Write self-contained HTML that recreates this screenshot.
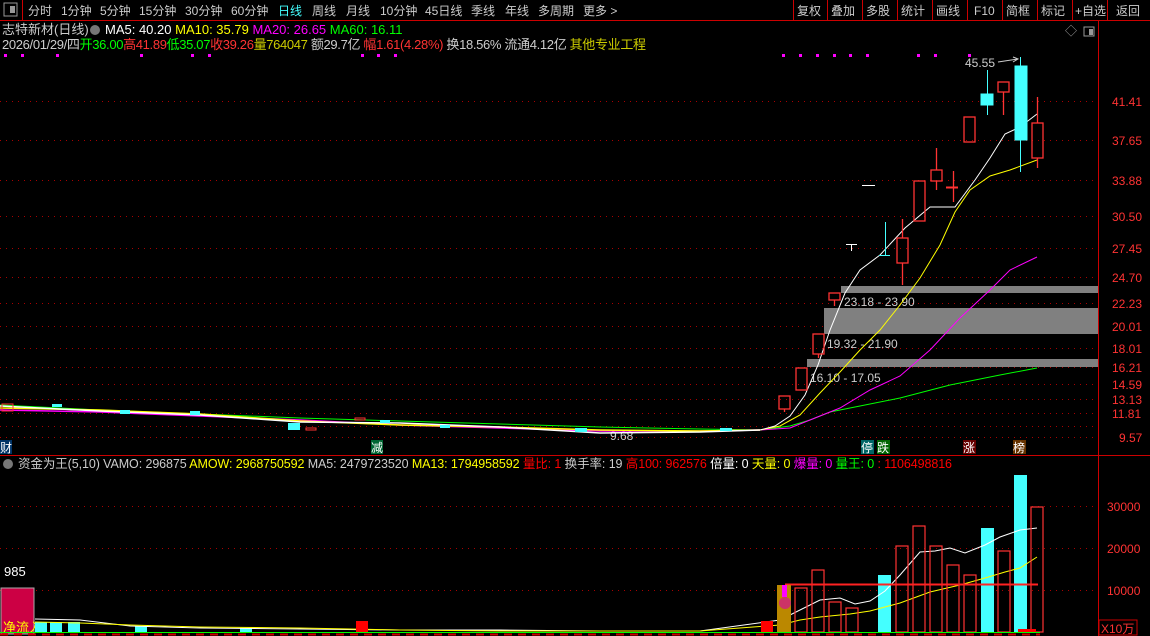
<!DOCTYPE html>
<html><head><meta charset="utf-8"><style>
body{margin:0;background:#000;width:1150px;height:636px;overflow:hidden;font-family:"Liberation Sans","Noto Sans CJK SC",sans-serif}
svg{position:absolute;left:0;top:0}
text{font-family:"Liberation Sans","Noto Sans CJK SC",sans-serif;font-size:12px}
</style></head><body>
<svg width="1150" height="636" viewBox="0 0 1150 636">
<!-- toolbar -->
<line x1="0" y1="20.5" x2="1150" y2="20.5" stroke="#c00" stroke-width="1"/>
<rect x="4" y="3" width="13" height="13" fill="none" stroke="#999"/><rect x="10" y="6" width="5" height="7" fill="#999"/>
<line x1="22.5" y1="0" x2="22.5" y2="20" stroke="#c00"/>
<g fill="#ccc" style="font-size:13px">
<text x="28" y="15">分时</text><text x="61" y="15">1分钟</text><text x="100" y="15">5分钟</text><text x="139" y="15">15分钟</text><text x="185" y="15">30分钟</text><text x="231" y="15">60分钟</text>
<text x="278" y="15" fill="#4ff">日线</text><text x="312" y="15">周线</text><text x="346" y="15">月线</text><text x="380" y="15">10分钟</text><text x="425" y="15">45日线</text><text x="471" y="15">季线</text><text x="505" y="15">年线</text><text x="538" y="15">多周期</text><text x="583" y="15">更多 &gt;</text>
</g>
<g stroke="#c00"><line x1="793.5" y1="0" x2="793.5" y2="20"/><line x1="827.5" y1="0" x2="827.5" y2="20"/><line x1="862.5" y1="0" x2="862.5" y2="20"/><line x1="897.5" y1="0" x2="897.5" y2="20"/><line x1="932.5" y1="0" x2="932.5" y2="20"/><line x1="967.5" y1="0" x2="967.5" y2="20"/><line x1="1002.5" y1="0" x2="1002.5" y2="20"/><line x1="1037.5" y1="0" x2="1037.5" y2="20"/><line x1="1072.5" y1="0" x2="1072.5" y2="20"/><line x1="1107.5" y1="0" x2="1107.5" y2="20"/></g>
<g fill="#ccc" style="font-size:13px"><text x="797" y="15">复权</text><text x="831" y="15">叠加</text><text x="866" y="15">多股</text><text x="901" y="15">统计</text><text x="936" y="15">画线</text><text x="974" y="15">F10</text><text x="1006" y="15">简框</text><text x="1041" y="15">标记</text><text x="1075" y="15">+自选</text><text x="1116" y="15">返回</text></g>
<!-- right axis -->
<line x1="1098.5" y1="20" x2="1098.5" y2="636" stroke="#c00"/>
<line x1="0" y1="455.5" x2="1150" y2="455.5" stroke="#c00"/>
<text x="1065" y="35" fill="#999" font-size="13">◇</text>
<rect x="1084" y="27" width="10" height="9" fill="none" stroke="#999"/><rect x="1089" y="29" width="4" height="6" fill="#999"/>
<!-- header lines -->
<text x="2" y="34" fill="#ccc" style="font-size:13px">志特新材(日线)</text>
<circle cx="95" cy="30" r="5" fill="#777"/>
<text x="105" y="34" style="font-size:13px"><tspan fill="#fff">MA5: 40.20 </tspan><tspan fill="#ff0">MA10: 35.79 </tspan><tspan fill="#f0f">MA20: 26.65 </tspan><tspan fill="#0f0">MA60: 16.11</tspan></text>
<text x="2" y="49" textLength="644" lengthAdjust="spacing" style="font-size:13px"><tspan fill="#ccc">2026/01/29/四</tspan><tspan fill="#0f0">开36.00</tspan><tspan fill="#f33">高41.89</tspan><tspan fill="#0f0">低35.07</tspan><tspan fill="#f33">收39.26</tspan><tspan fill="#cc0">量764047</tspan><tspan fill="#ccc"> 额29.7亿 </tspan><tspan fill="#f33">幅1.61(4.28%)</tspan><tspan fill="#ccc"> 换18.56% 流通4.12亿 </tspan><tspan fill="#cc0">其他专业工程</tspan></text>
<g fill="#f0f"><rect x="4" y="54" width="3" height="3"/><rect x="21" y="54" width="3" height="3"/><rect x="56" y="54" width="3" height="3"/><rect x="140" y="54" width="3" height="3"/><rect x="191" y="54" width="3" height="3"/><rect x="208" y="54" width="3" height="3"/><rect x="361" y="54" width="3" height="3"/><rect x="377" y="54" width="3" height="3"/><rect x="394" y="54" width="3" height="3"/>
<rect x="782" y="54" width="3" height="3"/><rect x="799" y="54" width="3" height="3"/><rect x="816" y="54" width="3" height="3"/><rect x="833" y="54" width="3" height="3"/><rect x="849" y="54" width="3" height="3"/><rect x="866" y="54" width="3" height="3"/><rect x="917" y="54" width="3" height="3"/><rect x="934" y="54" width="3" height="3"/><rect x="968" y="54" width="3" height="3"/></g>
<!-- grid -->
<g stroke="#a00" stroke-dasharray="1,5">
<line x1="0" y1="101.5" x2="1098" y2="101.5"/><line x1="0" y1="140.5" x2="1098" y2="140.5"/><line x1="0" y1="180.5" x2="1098" y2="180.5"/><line x1="0" y1="216.5" x2="1098" y2="216.5"/><line x1="0" y1="248.5" x2="1098" y2="248.5"/><line x1="0" y1="277.5" x2="1098" y2="277.5"/><line x1="0" y1="303.5" x2="1098" y2="303.5"/><line x1="0" y1="326.5" x2="1098" y2="326.5"/><line x1="0" y1="348.5" x2="1098" y2="348.5"/><line x1="0" y1="367.5" x2="1098" y2="367.5"/><line x1="0" y1="384.5" x2="1098" y2="384.5"/><line x1="0" y1="399.5" x2="1098" y2="399.5"/><line x1="0" y1="413.5" x2="1098" y2="413.5"/><line x1="0" y1="426.5" x2="1098" y2="426.5"/><line x1="0" y1="437.5" x2="1098" y2="437.5"/>
<line x1="0" y1="506.5" x2="1098" y2="506.5"/><line x1="0" y1="548.5" x2="1098" y2="548.5"/><line x1="0" y1="590.5" x2="1098" y2="590.5"/>
</g>
<g fill="#f33" font-size="13"><text x="1112" y="106">41.41</text><text x="1112" y="145">37.65</text><text x="1112" y="185">33.88</text><text x="1112" y="221">30.50</text><text x="1112" y="253">27.45</text><text x="1112" y="282">24.70</text><text x="1112" y="308">22.23</text><text x="1112" y="331">20.01</text><text x="1112" y="353">18.01</text><text x="1112" y="372">16.21</text><text x="1112" y="389">14.59</text><text x="1112" y="404">13.13</text><text x="1112" y="418">11.81</text><text x="1119" y="442">9.57</text>
<text x="1107" y="511">30000</text><text x="1107" y="553">20000</text><text x="1107" y="595">10000</text></g>
<rect x="1099" y="620" width="38" height="15" fill="none" stroke="#c00"/><text x="1101" y="633" fill="#f33">X10万</text>
<!-- bands -->
<g fill="#808080"><rect x="841" y="286" width="257" height="7"/><rect x="824" y="308" width="274" height="26"/><rect x="807" y="359" width="291" height="8"/></g>
<g fill="#ccc" style="font-size:13px"><text x="844" y="306">23.18 - 23.90</text><text x="827" y="348">19.32 - 21.90</text><text x="810" y="382">16.10 - 17.05</text><text x="965" y="67">45.55</text><text x="610" y="440">9.68</text></g>
<path d="M998 62 L1018 59 M1013 57 L1018 59 L1013 62" stroke="#ccc" fill="none"/>
<!-- flat left area lines -->
<polyline points="0,405 100,410 200,414 300,418 400,421 500,424 600,427 700,429 760,430" stroke="#0f0" fill="none"/>
<polyline points="0,410 100,412 200,416 300,420 400,425 500,428 600,431 700,431 760,430" stroke="#f0f" fill="none" stroke-width="1.5"/>
<polyline points="0,408 100,410 200,414 300,421 400,425 500,427 600,430 700,431 760,430" stroke="#ff0" fill="none" stroke-width="1.5"/>
<polyline points="0,406 100,411 200,415 300,422 400,423 500,427 600,433 700,432 760,430" stroke="#fff" fill="none" stroke-width="1.5"/>
<g fill="#4ff"><rect x="52" y="404" width="10" height="3"/><rect x="120" y="410" width="10" height="4"/><rect x="190" y="411" width="10" height="4"/><rect x="288" y="423" width="12" height="7"/><rect x="380" y="420" width="10" height="3"/><rect x="440" y="425" width="10" height="3"/><rect x="575" y="428" width="12" height="4"/><rect x="720" y="428" width="12" height="3"/></g>
<g fill="none" stroke="#f33"><rect x="2" y="404" width="11" height="7"/><rect x="306" y="428" width="10" height="2"/><rect x="355" y="418" width="10" height="2"/></g>
<!-- rising MAs -->
<polyline points="760,430 790,426 810,420 830,412 860,406 900,398 950,385 1000,375 1037,368" stroke="#0f0" fill="none"/>
<polyline points="760,430 790,428 810,420 840,408 870,390 900,376 930,350 960,318 990,290 1010,270 1037,257" stroke="#f0f" fill="none"/>
<polyline points="760,430 780,426 800,415 820,393 840,372 860,350 880,330 900,305 920,278 940,245 955,212 970,190 990,176 1010,170 1037,160" stroke="#ff0" fill="none"/>
<polyline points="760,430 775,426 790,416 805,395 818,365 830,330 845,293 860,270 880,255 905,228 930,207 955,207 975,180 990,158 1005,134 1020,127 1037,114" stroke="#fff" fill="none"/>
<!-- candles -->
<g stroke="#f33" fill="none" stroke-width="1.3">
<rect x="779" y="396" width="11" height="13"/><line x1="784.5" y1="409" x2="784.5" y2="412"/>
<rect x="796" y="368" width="11" height="22"/>
<rect x="813" y="334" width="11" height="20"/><line x1="818.5" y1="354" x2="818.5" y2="358"/>
<rect x="829" y="293" width="11" height="7"/><line x1="834.5" y1="300" x2="834.5" y2="306"/>
<rect x="897" y="238" width="11" height="25"/><line x1="902.5" y1="219" x2="902.5" y2="238"/><line x1="902.5" y1="263" x2="902.5" y2="285"/>
<rect x="914" y="181" width="11" height="40"/>
<rect x="931" y="170" width="11" height="11"/><line x1="936.5" y1="148" x2="936.5" y2="170"/><line x1="936.5" y1="181" x2="936.5" y2="190"/>
<line x1="946" y1="187.5" x2="958" y2="187.5" stroke-width="2"/><line x1="953.5" y1="171" x2="953.5" y2="202"/>
<rect x="964" y="117" width="11" height="25"/>
<rect x="998" y="82" width="11" height="10"/><line x1="1003.5" y1="92" x2="1003.5" y2="115"/>
<rect x="1032" y="123" width="11" height="35"/><line x1="1037.5" y1="97" x2="1037.5" y2="123"/><line x1="1037.5" y1="158" x2="1037.5" y2="168"/>
</g>
<g stroke="#fff"><line x1="862" y1="185.5" x2="875" y2="185.5"/><line x1="846" y1="244.5" x2="857" y2="244.5"/><line x1="851.5" y1="244" x2="851.5" y2="251"/></g>
<g stroke="#4ff" fill="#4ff"><line x1="879" y1="255.5" x2="890" y2="255.5"/><line x1="885.5" y1="222" x2="885.5" y2="255"/>
<rect x="981" y="94" width="12" height="11"/><line x1="987.5" y1="70" x2="987.5" y2="115"/>
<rect x="1015" y="66" width="12" height="74"/><line x1="1020.5" y1="57" x2="1020.5" y2="172"/></g>
<!-- tags -->
<rect x="0" y="440" width="12" height="14" fill="#036"/><text x="0" y="452" fill="#fff">财</text>
<rect x="371" y="440" width="12" height="14" fill="#063"/><text x="371" y="452" fill="#fff">减</text>
<rect x="861" y="440" width="13" height="14" fill="#066"/><text x="861" y="452" fill="#fff">停</text>
<rect x="877" y="440" width="13" height="14" fill="#060"/><text x="877" y="452" fill="#fff">跌</text>
<rect x="963" y="440" width="13" height="14" fill="#600"/><text x="963" y="452" fill="#fff">涨</text>
<rect x="1013" y="440" width="13" height="14" fill="#630"/><text x="1013" y="452" fill="#fff">榜</text>
<!-- lower header -->
<circle cx="8" cy="464" r="5" fill="#777"/>
<text x="18" y="468" textLength="934" lengthAdjust="spacing" style="font-size:12.5px"><tspan fill="#ccc">资金为王(5,10) VAMO: 296875 </tspan><tspan fill="#ff0">AMOW: 2968750592 </tspan><tspan fill="#ccc">MA5: 2479723520 </tspan><tspan fill="#ff0">MA13: 1794958592 </tspan><tspan fill="#f00">量比: 1 </tspan><tspan fill="#ccc">换手率: 19 </tspan><tspan fill="#f00">高100: 962576 </tspan><tspan fill="#fff">倍量: 0 </tspan><tspan fill="#ff0">天量: 0 </tspan><tspan fill="#f0f">爆量: 0 </tspan><tspan fill="#0f0">量王: 0 </tspan><tspan fill="#f00">: 1106498816</tspan></text>
<text x="4" y="576" fill="#fff" style="font-size:13px">985</text>
<!-- lower volume -->
<rect x="1" y="588" width="33" height="46" fill="#c04" stroke="#aaa"/><text x="3" y="632" fill="#ff0" style="font-size:13px">净流入</text>
<g fill="#4ff"><rect x="35" y="622" width="12" height="10"/><rect x="50" y="622" width="12" height="10"/><rect x="68" y="622" width="12" height="10"/><rect x="135" y="626" width="12" height="6"/><rect x="240" y="628" width="12" height="4"/><rect x="878" y="575" width="13" height="57"/><rect x="981" y="528" width="13" height="104"/><rect x="1014" y="475" width="13" height="157"/></g>
<polyline points="35,619 80,620 130,626 200,628 300,629 400,630 500,630 600,631 700,631 780,620 800,610 820,600 840,598 855,604 870,601 885,591 900,575 920,552 935,551 950,548 965,553 985,545 1000,537 1020,530 1037,528" stroke="#fff" fill="none"/>
<polyline points="35,622 80,623 130,625 200,627 300,628 400,630 500,631 600,631 700,631 780,625 800,620 820,617 850,614 870,611 900,603 930,592 960,585 985,578 1005,572 1020,568 1037,557" stroke="#ff0" fill="none"/>
<g fill="none" stroke="#f33" stroke-width="1.2"><rect x="795" y="588" width="12" height="44"/><rect x="812" y="570" width="12" height="62"/><rect x="829" y="602" width="12" height="30"/><rect x="846" y="608" width="12" height="24"/><rect x="896" y="546" width="12" height="86"/><rect x="913" y="526" width="12" height="106"/><rect x="930" y="546" width="12" height="86"/><rect x="947" y="565" width="12" height="67"/><rect x="964" y="575" width="12" height="57"/><rect x="998" y="551" width="12" height="81"/><rect x="1031" y="507" width="12" height="125"/></g>
<line x1="785" y1="584.5" x2="1038" y2="584.5" stroke="#f22" stroke-width="2"/>
<rect x="777" y="585" width="14" height="47" fill="#b80"/><rect x="782" y="585" width="5" height="12" fill="#f0f"/><circle cx="785" cy="603" r="6" fill="#c36"/>
<rect x="356" y="621" width="12" height="11" fill="#f00"/><rect x="761" y="621" width="12" height="11" fill="#f00"/><rect x="1018" y="629" width="18" height="4" fill="#f00"/>
<line x1="0" y1="632.5" x2="1040" y2="632.5" stroke="#0f0"/>
<line x1="0" y1="634.5" x2="1040" y2="634.5" stroke="#c00" stroke-dasharray="8,6" stroke-width="2"/>
</svg>
</body></html>
